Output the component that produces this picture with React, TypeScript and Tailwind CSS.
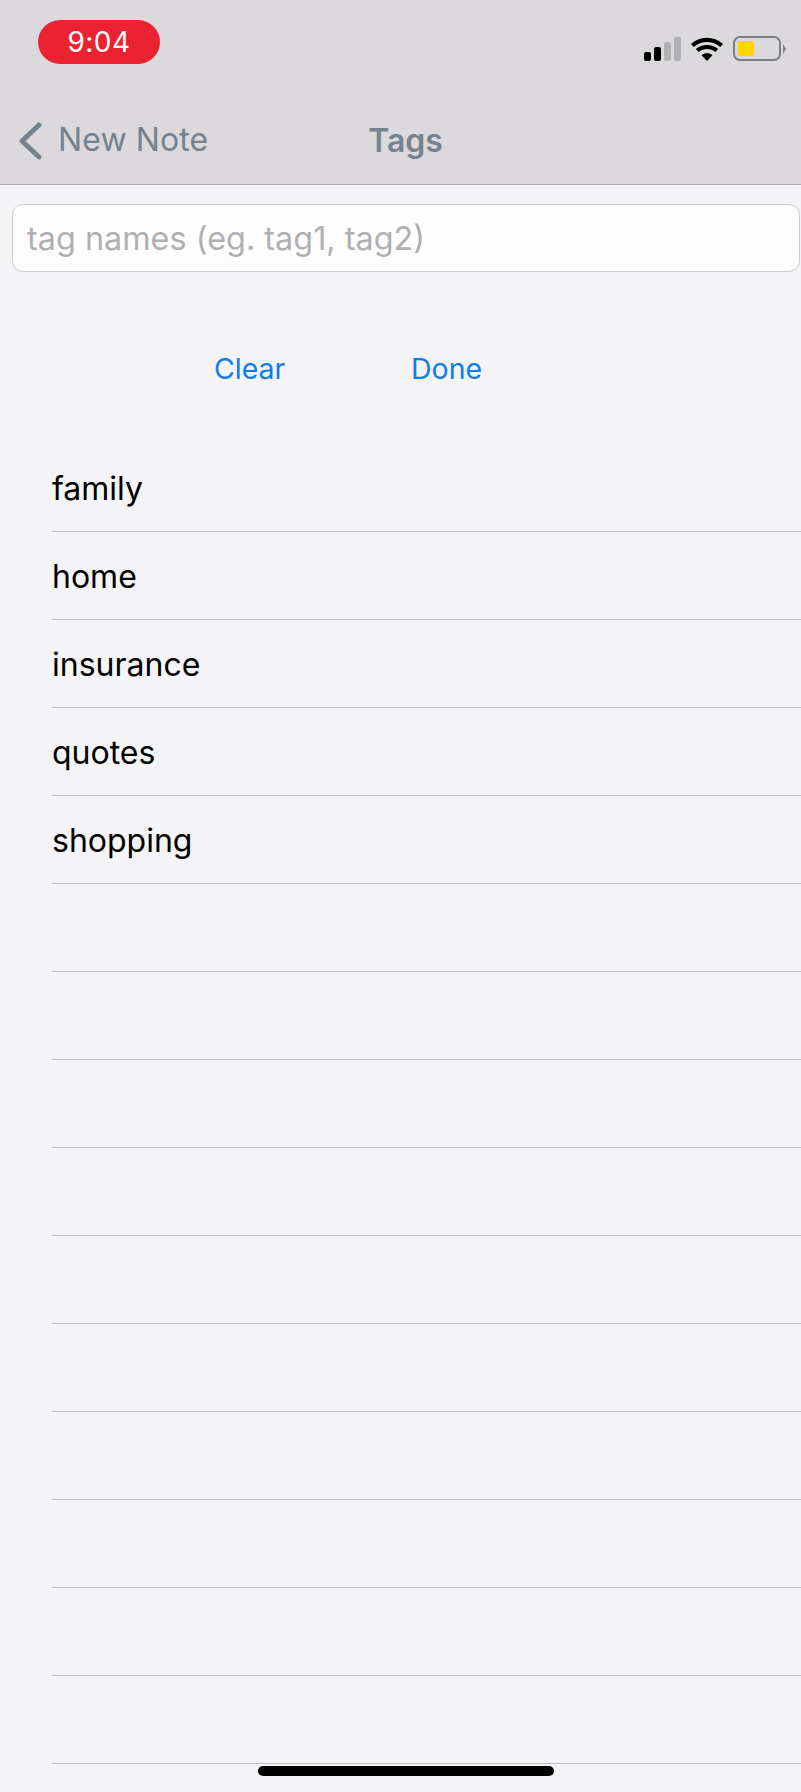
const tags = ['family', 'home', 'insurance', 'quotes', 'shopping', '', '', '', '', '', '', '', '', '', ''];

function StatusIcons() {
  return (
    <div className="flex items-center">
      <svg width="38" height="24" viewBox="0 0 38 24" className="block">
        <rect x="0" y="15" width="7" height="9" rx="2" fill="#000" />
        <rect x="10" y="10" width="7" height="14" rx="2" fill="#000" />
        <rect x="20" y="5" width="7" height="19" rx="2" fill="#b2b1b3" />
        <rect x="30" y="0" width="7" height="24" rx="2" fill="#b2b1b3" />
      </svg>
      <svg width="32" height="24" viewBox="0 0 32 24" className="block ml-[9px]">
        <path d="M16 24 L10.6 18.3 C13.6 15.7 18.4 15.7 21.4 18.3 Z" fill="#000" />
        <path d="M7.6 15 L4.8 12 C11 6.6 21 6.6 27.2 12 L24.4 15 C19.6 10.9 12.4 10.9 7.6 15 Z" fill="#000" />
        <path d="M2.8 10 L0 7 C9 -1.4 23 -1.4 32 7 L29.2 10 C21.8 3.2 10.2 3.2 2.8 10 Z" fill="#000" />
      </svg>
      <div className="flex items-center ml-[10px]">
        <div className="w-[48px] h-[25px] rounded-[7px] border-2 border-[#7e7d80] p-[3px]">
          <div className="w-[16px] h-full rounded-[2px] bg-[#fdd504]" />
        </div>
        <div className="w-0 h-0 ml-[2px] border-y-[5px] border-y-transparent border-l-[3px] border-l-[#7e7d80]" />
      </div>
    </div>
  );
}

export default function App() {
  return (
    <div className="h-[1792px] w-[801px] overflow-hidden relative bg-[#f4f3f5] font-['Inter','Liberation_Sans',sans-serif]">
      {/* 상단 바 */}
      <div className="h-[185px] bg-[#dbd9db] border-b border-[#ababae] relative">
        <div className="flex items-start justify-between pt-[20px] pl-[38px] pr-[15px]">
          <div className="w-[122px] h-[44px] rounded-full bg-[#ea2232] text-white flex items-center justify-center text-[28px] font-normal tracking-[0.5px]">
            9:04
          </div>
          <div className="pt-[16px]">
            <StatusIcons />
          </div>
        </div>
        <div className="flex items-center pl-[18px] mt-[53px] h-[46px]">
          <svg width="24" height="38" viewBox="0 0 24 38" fill="none" className="block mt-[2px]">
            <path d="M21 3 L4 19 L21 35" stroke="#76828e" strokeWidth="5" strokeLinecap="round" strokeLinejoin="round" />
          </svg>
          <span className="ml-[16px] text-[32px] text-[#76828e] tracking-[0.1px]">New Note</span>
        </div>
        <div className="absolute left-0 right-0 top-[118px] h-[46px] pl-[10px] flex items-center justify-center text-[32px] font-semibold text-[#76828e]">
          Tags
        </div>
      </div>

      {/* 입력창 */}
      <div className="pl-[12px] pt-[19px]">
        <div className="h-[68px] w-[788px] rounded-[11px] border border-[#cccbce] bg-[#fefdfe] flex items-center pl-[14px] pt-[2px] text-[32.4px] text-[#b0afb1]">
          tag names (eg. tag1, tag2)
        </div>
      </div>

      <div className="flex pl-[214px] pt-[76px] h-[112px] text-[28.5px] text-[#127ce6]">
        <span className="w-[197px]">Clear</span>
        <span>Done</span>
      </div>

      {/* 태그 목록 */}
      <div className="ml-[52px] mt-[60px]">
        {tags.map((tag, i) => (
          <div key={i} className="h-[88px] pt-[2px] border-b border-[#c1bfc3] flex items-center text-[32px] text-black">
            {tag}
          </div>
        ))}
      </div>

      <div className="absolute left-[258px] top-[1766px] w-[296px] h-[10px] rounded-full bg-black" />
    </div>
  );
}
